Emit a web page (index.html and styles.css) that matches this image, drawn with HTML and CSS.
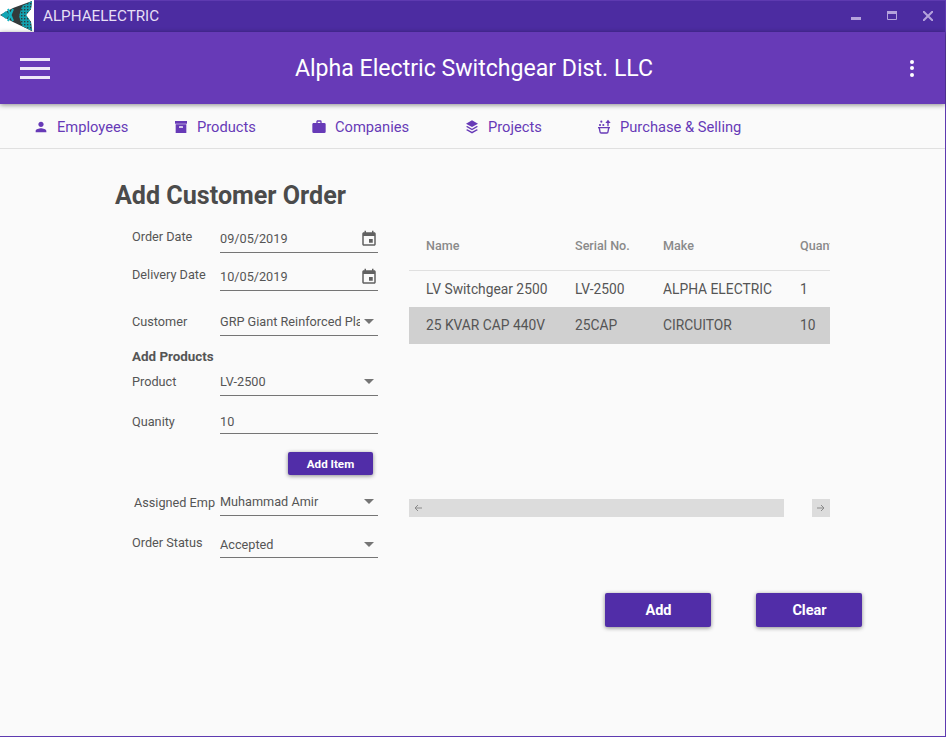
FILE: index.html
```html
<!DOCTYPE html>
<html lang="en">
<head>
    <meta charset="UTF-8">
    <meta name="viewport" content="width=device-width, initial-scale=1.0">
    <title>Add Customer Order</title>
    <link rel="stylesheet" href="styles.css">
</head>
<body>
    <div class="window">
        <div class="titlebar">
            <svg class="logo" viewBox="0 0 34 32">
                <defs>
                    <pattern id="speck" width="3" height="3" patternUnits="userSpaceOnUse">
                        <rect width="3" height="3" fill="#12a0ae"/>
                        <rect width="1.4" height="1.4" fill="#2f3b3c"/>
                    </pattern>
                </defs>
                <rect width="34" height="32" fill="#fff"/>
                <polygon points="0,15 13,8 32,1 31,9 26,15 31,22 32,31 13,22" fill="#333a3b"/>
                <path d="M1 15l5-4 4 4-4 4z" fill="#12a6b5"/>
                <path d="M8 9l5 12M13 9L8 21" stroke="#17b3c2" stroke-width="2" fill="none"/>
                <path d="M22 6l10-5-1 8-5 6 5 7 1 9-10-5-3-10z" fill="url(#speck)"/>
            </svg>
            <span class="app-name">ALPHAELECTRIC</span>
            <div class="window-btns">
                <svg viewBox="0 0 10 10"><rect x="0" y="6" width="10" height="3" fill="#b5a3dc"/></svg>
                <svg viewBox="0 0 10 10"><path d="M.5.5h9v8h-9z" fill="none" stroke="#b5a3dc"/><rect y="0" width="10" height="3" fill="#b5a3dc"/></svg>
                <svg viewBox="0 0 10 10"><path d="M0 0l10 10M10 0L0 10" stroke="#b5a3dc" stroke-width="2"/></svg>
            </div>
        </div>

        <header class="appbar">
            <div class="burger"><i></i><i></i><i></i></div>
            <h1>Alpha Electric Switchgear Dist. LLC</h1>
            <div class="dots"><i></i><i></i><i></i></div>
        </header>

        <nav class="tabs">
            <a class="tab tab-employees"><svg viewBox="0 0 24 24"><path d="M12 12c2.21 0 4-1.79 4-4s-1.79-4-4-4-4 1.79-4 4 1.79 4 4 4zm0 2c-2.67 0-8 1.34-8 4v2h16v-2c0-2.66-5.33-4-8-4z"/></svg>Employees</a>
            <a class="tab tab-products"><svg viewBox="0 0 24 24"><path d="M3 3h18v4H3V3zm1 5h16v13H4V8zm5.5 3a.5.5 0 0 0-.5.5V13h6v-1.5a.5.5 0 0 0-.5-.5h-5z"/></svg>Products</a>
            <a class="tab tab-companies"><svg viewBox="0 0 24 24"><path d="M10 2h4a2 2 0 0 1 2 2v2h4a2 2 0 0 1 2 2v11a2 2 0 0 1-2 2H4a2 2 0 0 1-2-2V8c0-1.11.89-2 2-2h4V4c0-1.11.89-2 2-2zm4 4V4h-4v2h4z"/></svg>Companies</a>
            <a class="tab tab-projects"><svg viewBox="0 0 24 24"><path d="M12 2l9 5-9 5-9-5zM5 10.6l7 3.9 7-3.9 2 1.2-9 5-9-5zM5 15.4l7 3.9 7-3.9 2 1.2-9 5-9-5z"/></svg>Projects</a>
            <a class="tab tab-purchase"><svg viewBox="0 0 24 24"><path d="M3 12h18v2h-1l-1 5a3 3 0 0 1-3 3H8a3 3 0 0 1-3-3l-1-5H3zm3.1 2l.9 5a1 1 0 0 0 1 1h8a1 1 0 0 0 1-1l.9-5z"/><circle cx="6" cy="9" r="1.6"/><circle cx="11" cy="9" r="1.6"/><circle cx="8" cy="4" r="1.6"/><path d="M17 11V6h-3l4-5 4 5h-3v5z"/></svg>Purchase &amp; Selling</a>
        </nav>

        <main class="content">
            <h2>Add Customer Order</h2>
            <div class="columns">
                <form class="order-form">
                    <label class="lbl lbl-high">Order Date</label>
                    <div class="field"><span>09/05/2019</span><svg class="cal" viewBox="0 0 24 24"><path d="M17 12h-5v5h5v-5zM16 1v2H8V1H6v2H5c-1.11 0-1.99.9-1.99 2L3 19c0 1.1.89 2 2 2h14c1.1 0 2-.9 2-2V5c0-1.1-.9-2-2-2h-1V1h-2zm3 18H5V8h14v11z"/></svg></div>

                    <label class="lbl lbl-high">Delivery Date</label>
                    <div class="field"><span>10/05/2019</span><svg class="cal" viewBox="0 0 24 24"><path d="M17 12h-5v5h5v-5zM16 1v2H8V1H6v2H5c-1.11 0-1.99.9-1.99 2L3 19c0 1.1.89 2 2 2h14c1.1 0 2-.9 2-2V5c0-1.1-.9-2-2-2h-1V1h-2zm3 18H5V8h14v11z"/></svg></div>

                    <label class="lbl">Customer</label>
                    <div class="field select"><span class="clip">GRP Giant Reinforced Plastic</span><b class="caret"></b></div>

                    <div class="section-title">Add Products</div>

                    <label class="lbl">Product</label>
                    <div class="field select"><span>LV-2500</span><b class="caret"></b></div>

                    <label class="lbl lbl-low">Quanity</label>
                    <div class="field field-low"><span>10</span></div>

                    <div class="add-item-row"><button type="button" class="btn btn-small">Add Item</button></div>

                    <label class="lbl lbl-assigned">Assigned Emp</label>
                    <div class="field select"><span>Muhammad Amir</span><b class="caret"></b></div>

                    <label class="lbl lbl-status">Order Status</label>
                    <div class="field select field-status"><span>Accepted</span><b class="caret"></b></div>
                </form>

                <div class="grid-wrap">
                    <div class="grid-view">
                        <table>
                            <thead>
                                <tr><th class="c-name">Name</th><th class="c-serial">Serial No.</th><th class="c-make">Make</th><th class="c-qty">Quantity</th></tr>
                            </thead>
                            <tbody>
                                <tr><td>LV Switchgear 2500</td><td>LV-2500</td><td>ALPHA ELECTRIC</td><td>1</td></tr>
                                <tr class="selected"><td>25 KVAR CAP 440V</td><td>25CAP</td><td>CIRCUITOR</td><td>10</td></tr>
                            </tbody>
                        </table>
                    </div>
                    <div class="scrollbar">
                        <div class="thumb"><svg class="arrow" viewBox="0 0 10 10"><path d="M9 5H2M5 2L2 5l3 3" fill="none" stroke="#8a8a8a"/></svg></div>
                        <div class="scroll-end"><svg class="arrow" viewBox="0 0 10 10"><path d="M1 5h7M5 2l3 3-3 3" fill="none" stroke="#8a8a8a"/></svg></div>
                    </div>
                </div>
            </div>
            <div class="actions">
                <button type="button" class="btn btn-large">Add</button>
                <button type="button" class="btn btn-large">Clear</button>
            </div>
        </main>
    </div>
</body>
</html>
```

FILE: styles.css
```css
html, body {
    margin: 0;
    padding: 0;
    height: 100%;
}
body {
    font-family: Roboto, "Liberation Sans", sans-serif;
    background: #fafafa;
    color: #555;
    overflow: hidden;
}
.window {
    width: 946px;
    height: 737px;
    box-sizing: border-box;
    border-right: 1px solid #5e3ab0;
    border-bottom: 1px solid #5e3ab0;
    display: flex;
    flex-direction: column;
    background: #fafafa;
}

/* title bar */
.titlebar {
    height: 32px;
    flex: none;
    display: flex;
    align-items: center;
    background: #4c2ca1;
    box-shadow: inset 0 1px 0 #5e3ab0;
}
.logo {
    width: 34px;
    height: 32px;
    display: block;
}
.app-name {
    margin-left: 9px;
    font-size: 15.2px;
    color: #e6dff5;
}
.window-btns {
    margin-left: auto;
    display: flex;
    gap: 26px;
    padding-right: 12px;
}
.window-btns svg {
    width: 10px;
    height: 10px;
}

/* purple header */
.appbar {
    height: 72px;
    flex: none;
    background: #673ab7;
    display: flex;
    align-items: center;
    box-shadow: 0 1px 5px rgba(0, 0, 0, 0.45);
    position: relative;
    padding: 0 31px 0 20px;
}
.appbar h1 {
    flex: 1;
    margin: 0;
    font-size: 23.1px;
    font-weight: 400;
    color: #fff;
    text-align: center;
    padding-right: 12px;
}
.burger {
    width: 30px;
    display: flex;
    flex-direction: column;
    gap: 6px;
}
.burger i {
    display: block;
    height: 3px;
    background: #eee8f8;
}
.dots {
    display: flex;
    flex-direction: column;
    gap: 2.5px;
}
.dots i {
    display: block;
    width: 4px;
    height: 4px;
    border-radius: 50%;
    background: #fff;
}

/* tabs */
.tabs {
    height: 45px;
    flex: none;
    box-sizing: border-box;
    display: flex;
    align-items: center;
    padding: 2px 0 0 33px;
    border-bottom: 1px solid #e0e0e0;
}
.tab {
    display: flex;
    align-items: center;
    gap: 8px;
    font-size: 14.7px;
    color: #673ab7;
}
.tab svg {
    width: 16px;
    height: 16px;
    fill: #673ab7;
}
.tab-employees { width: 140px; }
.tab-products { width: 138px; }
.tab-companies { width: 153px; }
.tab-projects { width: 132px; }

/* content */
.content {
    flex: 1;
    padding-left: 115px;
}
.content h2 {
    margin: 0;
    padding-top: 32px;
    height: 43px;
    line-height: 30px;
    font-size: 25.1px;
    font-weight: 700;
    color: #4b4b4b;
}
.columns {
    display: flex;
}
.order-form {
    width: 294px;
    padding-left: 17px;
    box-sizing: border-box;
    display: grid;
    grid-template-columns: 88px 158px;
    grid-template-rows: 29px 38px 45px 34px 26px 38px 41px 41px 42px;
    font-size: 12.7px;
}
.lbl {
    align-self: end;
    line-height: 16px;
    padding-bottom: 6px;
    white-space: nowrap;
}
.lbl-high { padding-bottom: 8px; }
.lbl-low { padding-bottom: 4px; }
.lbl-assigned { padding: 0 0 5px 2px; }
.lbl-status { padding-bottom: 7px; }
.field {
    border-bottom: 1px solid #757575;
    display: flex;
    align-items: center;
    align-self: end;
    height: 24px;
    box-sizing: border-box;
    position: relative;
    line-height: 16px;
    padding-bottom: 4px;
}
.field-low { height: 20px; }
.field-status { height: 22px; }
.field-status .caret { top: 6px; }
.clip {
    width: 140px;
    overflow: hidden;
    white-space: nowrap;
}
.cal {
    width: 18px;
    height: 18px;
    flex: none;
    margin-left: auto;
    fill: #616161;
}
.caret {
    position: absolute;
    right: 4px;
    top: 7px;
    border-left: 5px solid transparent;
    border-right: 5px solid transparent;
    border-top: 5px solid #757575;
}
.section-title {
    grid-column: 1 / 3;
    font-size: 13.4px;
    font-weight: 700;
    padding-top: 13px;
    line-height: 16px;
}
.add-item-row {
    grid-column: 1 / 3;
    display: flex;
    justify-content: flex-end;
    padding: 18px 5px 0 0;
}

/* buttons */
.btn {
    background: #512da8;
    color: #fff;
    border: 0;
    border-radius: 2px;
    font-family: inherit;
    font-weight: 700;
    box-shadow: 0 1px 4px rgba(0, 0, 0, 0.45);
}
.btn-small {
    width: 85px;
    height: 23px;
    font-size: 11.6px;
    padding: 0;
}
.btn-large {
    width: 106px;
    height: 34px;
    font-size: 14.5px;
    padding: 0 0 0 1px;
}

/* table */
.grid-wrap {
    width: 421px;
}
.grid-view {
    height: 275px;
    overflow: hidden;
}
table {
    border-collapse: collapse;
    table-layout: fixed;
    width: 480px;
    font-size: 13.8px;
}
th, td {
    box-sizing: border-box;
}
th {
    height: 46px;
    padding: 0 0 3px 17px;
    text-align: left;
    font-size: 12.6px;
    font-weight: 500;
    color: #8a8a8a;
    border-bottom: 1px solid #e0e0e0;
    white-space: nowrap;
}
td {
    height: 37px;
    padding: 0 0 0 17px;
    white-space: nowrap;
    color: #555;
}
.c-name { width: 149px; }
.c-serial { width: 88px; }
.c-make { width: 137px; }
.selected td {
    padding-bottom: 2px;
    background: #d0d0d0;
}
.scrollbar {
    display: flex;
    justify-content: space-between;
    height: 18px;
}
.thumb {
    width: 375px;
    background: #dcdcdc;
}
.scroll-end {
    width: 18px;
    background: #dcdcdc;
}
.arrow {
    width: 10px;
    height: 10px;
    display: block;
    margin: 4px;
}
.actions {
    display: flex;
    gap: 45px;
    padding: 35px 0 0 490px;
}
```
